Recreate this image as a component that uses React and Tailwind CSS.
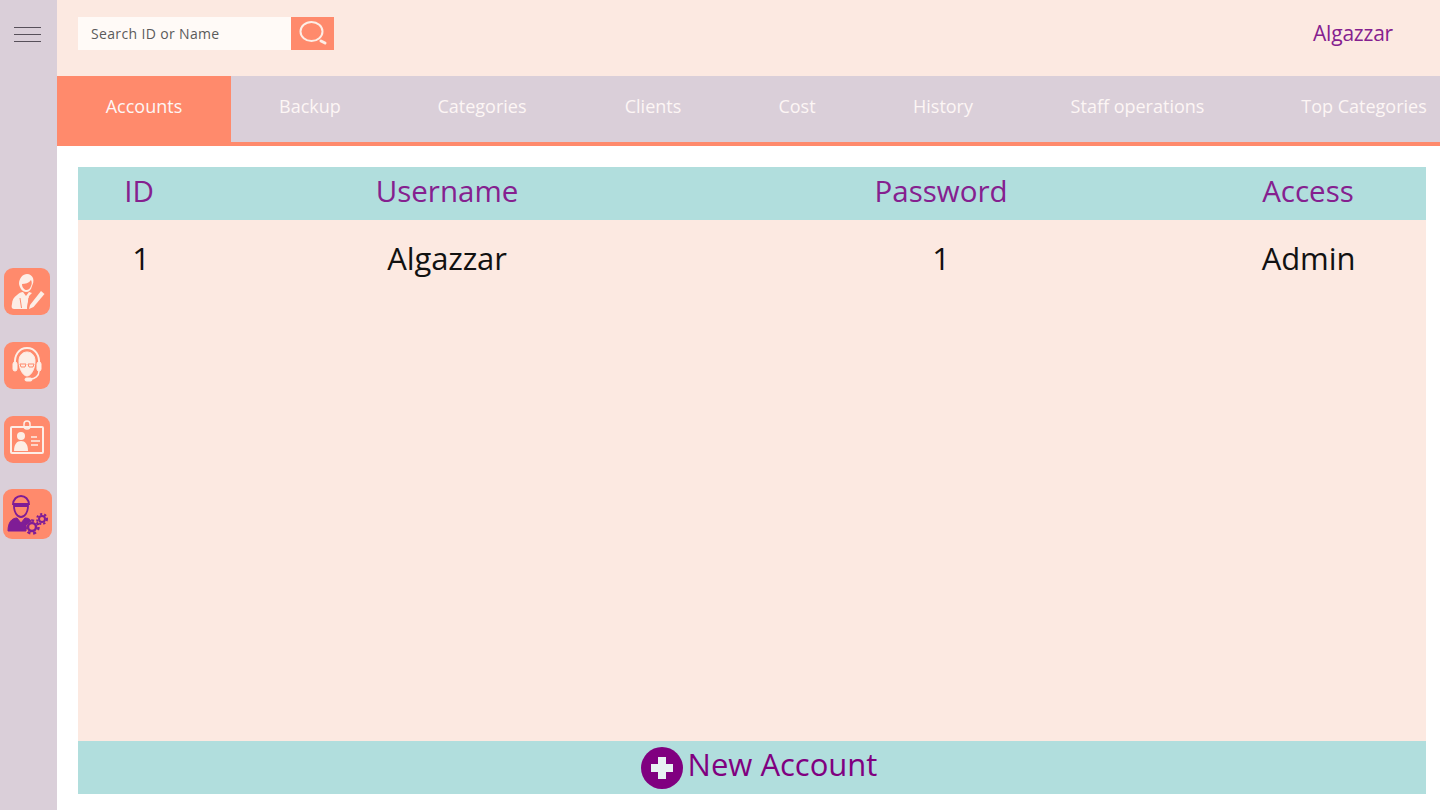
import { useState } from 'react'

const TABS = [
  { label: 'Accounts', width: 'w-[174px]' },
  { label: 'Backup', width: 'w-[158px]' },
  { label: 'Categories', width: 'w-[186px]' },
  { label: 'Clients', width: 'w-[156px]' },
  { label: 'Cost', width: 'w-[132px]' },
  { label: 'History', width: 'w-[160px]' },
  { label: 'Staff operations', width: 'w-[229px]' },
  { label: 'Top Categories', width: 'w-[224px]' },
]

const COLUMNS = 'grid w-full grid-cols-[122px_494px_494px_238px]'

function IconTile({ children, className = 'h-[47px] w-[46px]' }) {
  return (
    <button type="button" className={`flex items-center justify-center rounded-[9px] bg-[#ff8a6c] ${className}`}>
      {children}
    </button>
  )
}

function WriterIcon() {
  return (
    <svg width="40" height="40" viewBox="0 0 40 40" fill="#fdeee6">
      <path d="M12 12c0-6 4-10 8-10 3 0 5 2 6 4 1 3 0 6-1 8-1 4-3 6-6 6s-6-3-7-8z" />
      <path d="M15 12c3 0 7-1 9-4 1 2 1 4 0 6-1 3-3 4-4.500 4S15 16 15 12z" fill="#ff8a6c" />
      <path d="M10 23c2-2 4-3 6-3l3 4 3-4 3 1-3 3-2 13H8c-3 0-4-1-3-5 0-4 2-7 5-9z" />
      <path d="M23 33l11-14 3.500 3-11 13-4.500 2z" />
      <path d="M13 26l1.500 10M22 26l-1.500 10" stroke="#ff8a6c" strokeWidth="1" />
    </svg>
  )
}

function AgentIcon() {
  return (
    <svg width="40" height="42" viewBox="0 0 40 42" fill="none" stroke="#fdeee6">
      <path d="M8 20C7 10 12 3 20 3s13 7 12 17" strokeWidth="2" />
      <path d="M12 16c0-6 4-9 8-9s8 3 8 9c0 8-4 15-8 15s-8-7-8-15z" fill="#fdeee6" />
      <rect x="6" y="17" width="4" height="9" rx="2" fill="#fdeee6" />
      <rect x="30" y="17" width="4" height="9" rx="2" fill="#fdeee6" />
      <path d="M32 26c0 5-4 8-9 8" strokeWidth="1.500" />
      <rect x="18" y="33" width="7" height="3" rx="1.500" fill="#fdeee6" />
      <path d="M13 19h6l-1 3h-4zM21 19h6l-1 3h-4z" stroke="#ff8a6c" strokeWidth="1" />
    </svg>
  )
}

function BadgeIcon() {
  return (
    <svg width="40" height="40" viewBox="0 0 40 40" fill="none">
      <rect x="17" y="1" width="6" height="8" rx="3" stroke="#fdeee6" strokeWidth="1.500" />
      <rect x="4" y="7" width="32" height="26" rx="1" stroke="#fdeee6" strokeWidth="2" />
      <circle cx="14" cy="16" r="4" fill="#fdeee6" />
      <path d="M7 31c0-7 3-10 7-10s7 3 7 10z" fill="#fdeee6" />
      <path d="M24 17h6M24 21h9M24 25h7" stroke="#fdeee6" strokeWidth="1.500" />
    </svg>
  )
}

function EngineerIcon() {
  return (
    <svg width="46" height="42" viewBox="0 0 46 42" fill="none" stroke="#7f1d96">
      <path d="M9 12c0-6 4-9 8-9s8 3 8 9" strokeWidth="2" />
      <path d="M10 13c0 6 3 11 7 11s7-5 7-11z" strokeWidth="1.800" />
      <path d="M9 11h16" strokeWidth="2" />
      <path d="M4 38c0-9 4-13 9-13l4 5 4-5c3 0 5 1 6 3l-5 4v6z" fill="#7f1d96" />
      <circle cx="28" cy="34" r="4" strokeWidth="2.500" />
      <circle cx="28" cy="34" r="6.500" strokeWidth="2.500" strokeDasharray="3 2.800" />
      <circle cx="38" cy="26" r="3" strokeWidth="2" />
      <circle cx="38" cy="26" r="5" strokeWidth="2" strokeDasharray="2.200 2" />
    </svg>
  )
}

export default function App() {
  const [active] = useState('Accounts')

  return (
    <div className="flex h-[810px] w-[1440px] overflow-hidden bg-white font-['Open_Sans',sans-serif]">
      <aside className="flex w-[57px] shrink-0 flex-col items-center bg-[#dacfd9] pr-[3px]">
        <button type="button" className="mt-[27px] flex w-[27px] flex-col gap-[6px]">
          <span className="h-px w-full bg-[#57505a]" />
          <span className="h-px w-full bg-[#57505a]" />
          <span className="h-px w-full bg-[#57505a]" />
        </button>
        <div className="mt-[226px] flex flex-col items-center gap-[27px]">
          <IconTile><WriterIcon /></IconTile>
          <IconTile><AgentIcon /></IconTile>
          <IconTile><BadgeIcon /></IconTile>
          <IconTile className="-mt-[1px] h-[50px] w-[49px]"><EngineerIcon /></IconTile>
        </div>
      </aside>

      <div className="flex min-w-0 flex-1 flex-col">
        <header className="flex h-[76px] shrink-0 items-start justify-between bg-[#fce9e1] pl-[21px] pr-[47px] pt-[17px]">
          <div className="flex h-[33px]">
            <div className="flex w-[213px] items-center bg-[#fffaf7] pl-[13px] text-[14px] tracking-[0.35px] text-[#5b5b5b]">
              Search ID or Name
            </div>
            <div className="flex w-[43px] items-center justify-center bg-[#ff8a6c]">
              <svg width="36" height="30" viewBox="0 0 36 30" fill="none">
                <ellipse cx="16.500" cy="12.500" rx="11" ry="9.500" stroke="#fdeee6" strokeWidth="2" />
                <path d="M26 22l4 2" stroke="#fdeee6" strokeWidth="3" strokeLinecap="round" />
              </svg>
            </div>
          </div>
          <span className="text-[21px] leading-[32px] tracking-[-0.2px] text-[#85208f]">Algazzar</span>
        </header>

        <nav className="flex h-[70px] shrink-0 overflow-hidden border-b-4 border-[#ff8a6c] bg-[#dacfd9]">
          {TABS.map((tab) => (
            <div
              key={tab.label}
              className={`flex h-full shrink-0 items-center justify-center whitespace-nowrap pb-[6px] text-[18px] text-[#fdf6f5] ${tab.width} ${
                tab.label === active ? 'bg-[#ff8a6c]' : ''
              }`}
            >
              {tab.label}
            </div>
          ))}
        </nav>

        <main className="flex flex-1 flex-col pb-[16px] pl-[21px] pr-[14px] pt-[21px]">
          <div className={`${COLUMNS} h-[53px] shrink-0 items-center bg-[#b1dedd] pb-[5px] text-center text-[29.5px] text-[#85208f]`}>
            <span>ID</span>
            <span>Username</span>
            <span>Password</span>
            <span className="pl-[2px]">Access</span>
          </div>
          <div className="min-h-0 flex-1 bg-[#fce9e1]">
            <div className={`${COLUMNS} mt-[15px] text-center text-[31px] tracking-[-0.1px] text-[#111]`}>
              <span className="pl-[4px]">1</span>
              <span>Algazzar</span>
              <span>1</span>
              <span className="pl-[3px]">Admin</span>
            </div>
          </div>
          <button type="button" className="flex h-[53px] shrink-0 items-center justify-center gap-[5px] bg-[#b1dedd] pl-[14px] text-[31px] text-[#800080]">
            <svg width="42" height="42" viewBox="0 0 42 42" className="mt-[1px]">
              <circle cx="21" cy="21" r="21" fill="#800080" />
              <path d="M17 10h8v7h7v8h-7v7h-8v-7h-7v-8h7z" fill="#e8f2f3" />
            </svg>
            <span className="-mt-[6px]">New Account</span>
          </button>
        </main>
      </div>
    </div>
  )
}
